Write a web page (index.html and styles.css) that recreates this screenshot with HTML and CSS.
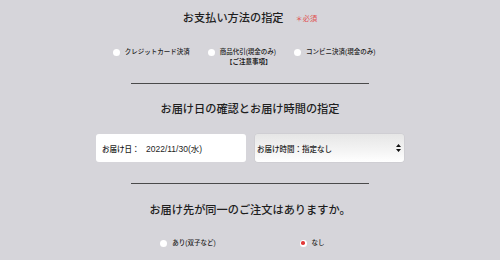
FILE: index.html
```html
<!DOCTYPE html>
<html lang="ja">
<head>
<meta charset="utf-8">
<link rel="stylesheet" href="styles.css">
</head>
<body>
<div class="page">
  <div class="title-row">
    <h2 class="heading">お支払い方法の指定</h2>
    <span class="required">＊必須</span>
  </div>
  <div class="pay-row">
    <div class="opt"><span class="radio"></span><span class="lbl">クレジットカード決済</span></div>
    <div class="opt opt-col">
      <div class="opt"><span class="radio"></span><span class="lbl">商品代引(現金のみ)</span></div>
      <div class="note">【ご注意事項】</div>
    </div>
    <div class="opt"><span class="radio"></span><span class="lbl">コンビニ決済(現金のみ)</span></div>
  </div>
  <hr class="rule rule1">
  <h2 class="heading h2b">お届け日の確認とお届け時間の指定</h2>
  <div class="boxes">
    <div class="datebox"><span class="dlabel">お届け日：</span><span class="dval">2022/11/30(水)</span></div>
    <div class="selectbox"><span class="slabel">お届け時間：指定なし</span>
      <svg class="arrows" width="5" height="8" viewBox="0 0 5 8"><path d="M2.5 0 L5 3 L0 3 Z M0 5 L5 5 L2.5 8 Z" fill="#111"/></svg>
    </div>
  </div>
  <hr class="rule rule2">
  <h2 class="heading h2c">お届け先が同一のご注文はありますか。</h2>
  <div class="same-row">
    <div class="cell"><div class="opt"><span class="radio"></span><span class="lbl">あり(双子など)</span></div></div>
    <div class="cell"><div class="opt"><span class="radio checked"></span><span class="lbl">なし</span></div></div>
  </div>
</div>
</body>
</html>
```

FILE: styles.css
```css
html, body {
  margin: 0;
  padding: 0;
  background: #d6d5da;
}
body {
  font-family: "Liberation Sans", "Noto Sans CJK JP", sans-serif;
  color: #1e1e1e;
  width: 500px;
  height: 260px;
  overflow: hidden;
}
.page {
  display: flex;
  flex-direction: column;
  align-items: center;
  padding-top: 11px;
}
.title-row {
  display: flex;
  align-items: center;
  gap: 12px;
  height: 14px;
}
.heading {
  margin: 0;
  font-size: 11.2px;
  font-weight: 500;
  line-height: 14px;
  text-align: center;
}
.required {
  color: #e0504f;
  font-size: 7.2px;
  line-height: 14px;
  padding-top: 2px;
}
.pay-row {
  display: flex;
  align-items: flex-start;
  gap: 18px;
  margin-top: 22px;
  margin-right: 12px;
}
.opt {
  display: flex;
  align-items: center;
  gap: 5px;
  height: 10px;
}
.opt-col {
  flex-direction: column;
  align-items: center;
  gap: 0;
  height: auto;
}
.radio {
  width: 7px;
  height: 7px;
  border-radius: 50%;
  background: #fff;
  display: flex;
  align-items: center;
  justify-content: center;
  flex: none;
}
.radio.checked::after {
  content: "";
  width: 3.5px;
  height: 3.5px;
  border-radius: 50%;
  background: #e23a3a;
}
.lbl {
  font-size: 6.5px;
  font-weight: 500;
  line-height: 10px;
  white-space: nowrap;
}
.note {
  font-size: 6.5px;
  font-weight: bold;
  line-height: 9px;
  margin-left: 14px;
}
.rule {
  width: 238px;
  margin: 0;
  border: 0;
  height: 1px;
  background: #4a4a4a;
}
.rule1 {
  margin-top: 17px;
}
.h2b {
  margin-top: 18px;
}
.boxes {
  display: flex;
  gap: 9px;
  margin-top: 18px;
}
.datebox {
  width: 150px;
  height: 28px;
  box-sizing: border-box;
  background: #fff;
  border-radius: 3px;
  display: flex;
  align-items: center;
  padding-left: 6px;
}
.dlabel {
  font-size: 7.5px;
  font-weight: 500;
  width: 44px;
}
.dval {
  font-size: 8.5px;
}
.selectbox {
  width: 149px;
  height: 28px;
  box-sizing: border-box;
  border-radius: 3px;
  background: linear-gradient(180deg, #e6e6e6 0%, #f3f3f3 55%, #ffffff 100%);
  box-shadow: 0 0 0 0.5px #c8c8cc;
  display: flex;
  align-items: center;
  justify-content: space-between;
  padding: 0 3px 0 2px;
}
.slabel {
  font-size: 7.5px;
  font-weight: 500;
}
.arrows {
  display: block;
}
.rule2 {
  margin-top: 21px;
}
.h2c {
  margin-top: 19px;
}
.same-row {
  display: grid;
  grid-template-columns: 124px 124px;
  margin-top: 21px;
}
.cell {
  display: flex;
  justify-content: center;
}
```
